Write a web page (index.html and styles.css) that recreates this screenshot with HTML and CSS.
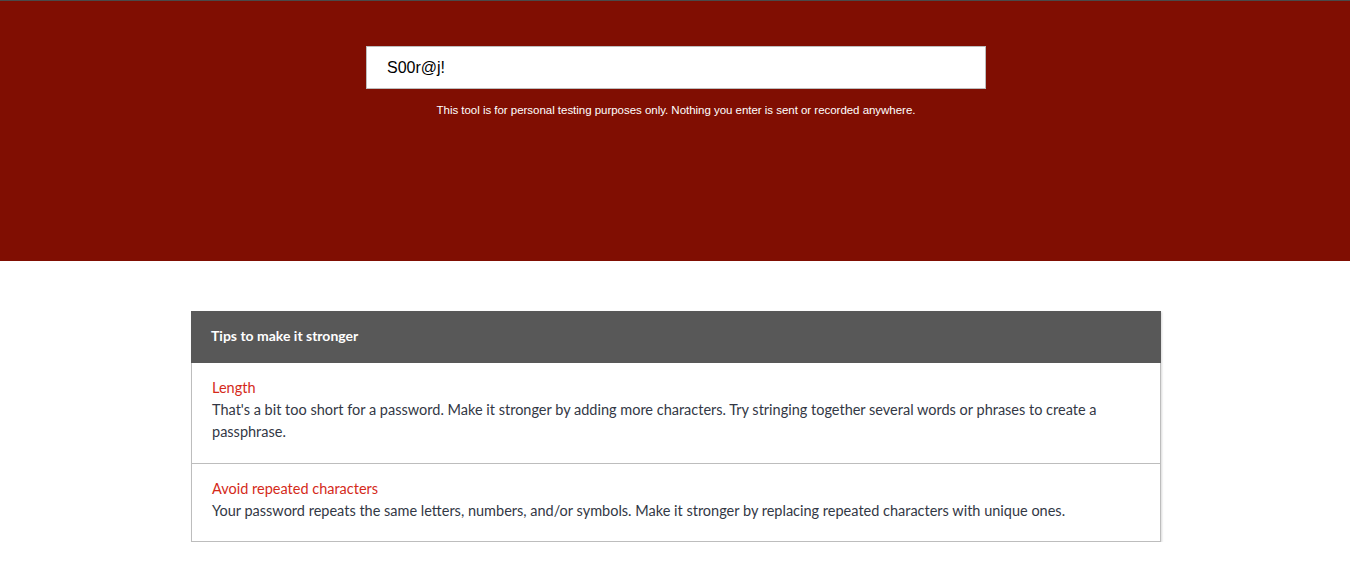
FILE: index.html
```html
<!DOCTYPE html>
<html lang="en">
<head>
<meta charset="utf-8">
<title>Password strength</title>
<link rel="stylesheet" href="styles.css">
</head>
<body>
<header class="hero">
  <div class="field-wrap">
    <input class="pw-input" type="text" value="S00r@j!">
  </div>
  <p class="disclaimer">This tool is for personal testing purposes only. Nothing you enter is sent or recorded anywhere.</p>
</header>
<main class="content">
  <section class="tips">
    <div class="tips-head">Tips to make it stronger</div>
    <div class="tip">
      <div class="tip-title">Length</div>
      <div class="tip-text">That's a bit too short for a password. Make it stronger by adding more characters. Try stringing together several words or phrases to create a passphrase.</div>
    </div>
    <div class="tip">
      <div class="tip-title">Avoid repeated characters</div>
      <div class="tip-text">Your password repeats the same letters, numbers, and/or symbols. Make it stronger by replacing repeated characters with unique ones.</div>
    </div>
  </section>
</main>
</body>
</html>
```
FILE: styles.css
```css
html, body {
  margin: 0;
  padding: 0;
  background: #fff;
}
body {
  font-family: Lato, "Open Sans", sans-serif;
  overflow: hidden;
}
.hero {
  background: #800e02;
  border-top: 1px solid #4a4a4a;
  height: 260px;
  padding-left: 2px;
  display: flex;
  flex-direction: column;
  align-items: center;
}
.field-wrap {
  margin-top: 45px;
}
.pw-input {
  box-sizing: border-box;
  width: 620px;
  height: 43px;
  border: 1px solid #bdbdbd;
  padding: 0 20px;
  font-family: "Liberation Sans", Arial, sans-serif;
  font-size: 16px;
  color: #000;
  background: #fff;
  outline: none;
  display: block;
}
.disclaimer {
  margin: 14px 0 0;
  color: #fff;
  font-family: "Liberation Sans", Arial, sans-serif;
  font-size: 11.5px;
  line-height: 14px;
  letter-spacing: -0.03px;
}
.content {
  padding: 50px 0 0 2px;
  display: flex;
  justify-content: center;
}
.tips {
  width: 970px;
  box-sizing: border-box;
  border: 1px solid #bdbdbd;
  border-top: none;
  box-shadow: 1px 1px 2px rgba(0,0,0,0.15);
}
.tips-head {
  background: #585858;
  height: 52px;
  line-height: 50px;
  padding: 0 20px;
  color: #fff;
  font-size: 14px;
  font-weight: 700;
  margin: 0 -1px;
}
.tip {
  padding: 14px 20px 20px;
  border-top: 1px solid #bdbdbd;
}
.tip:last-child {
  padding-bottom: 19px;
}
.tips-head + .tip {
  border-top: none;
}
.tip-title {
  color: #d42a1a;
  font-size: 14.5px;
  line-height: 22px;
}
.tip-text {
  color: #333845;
  font-size: 14.5px;
  line-height: 22px;
  letter-spacing: 0;
}
```
